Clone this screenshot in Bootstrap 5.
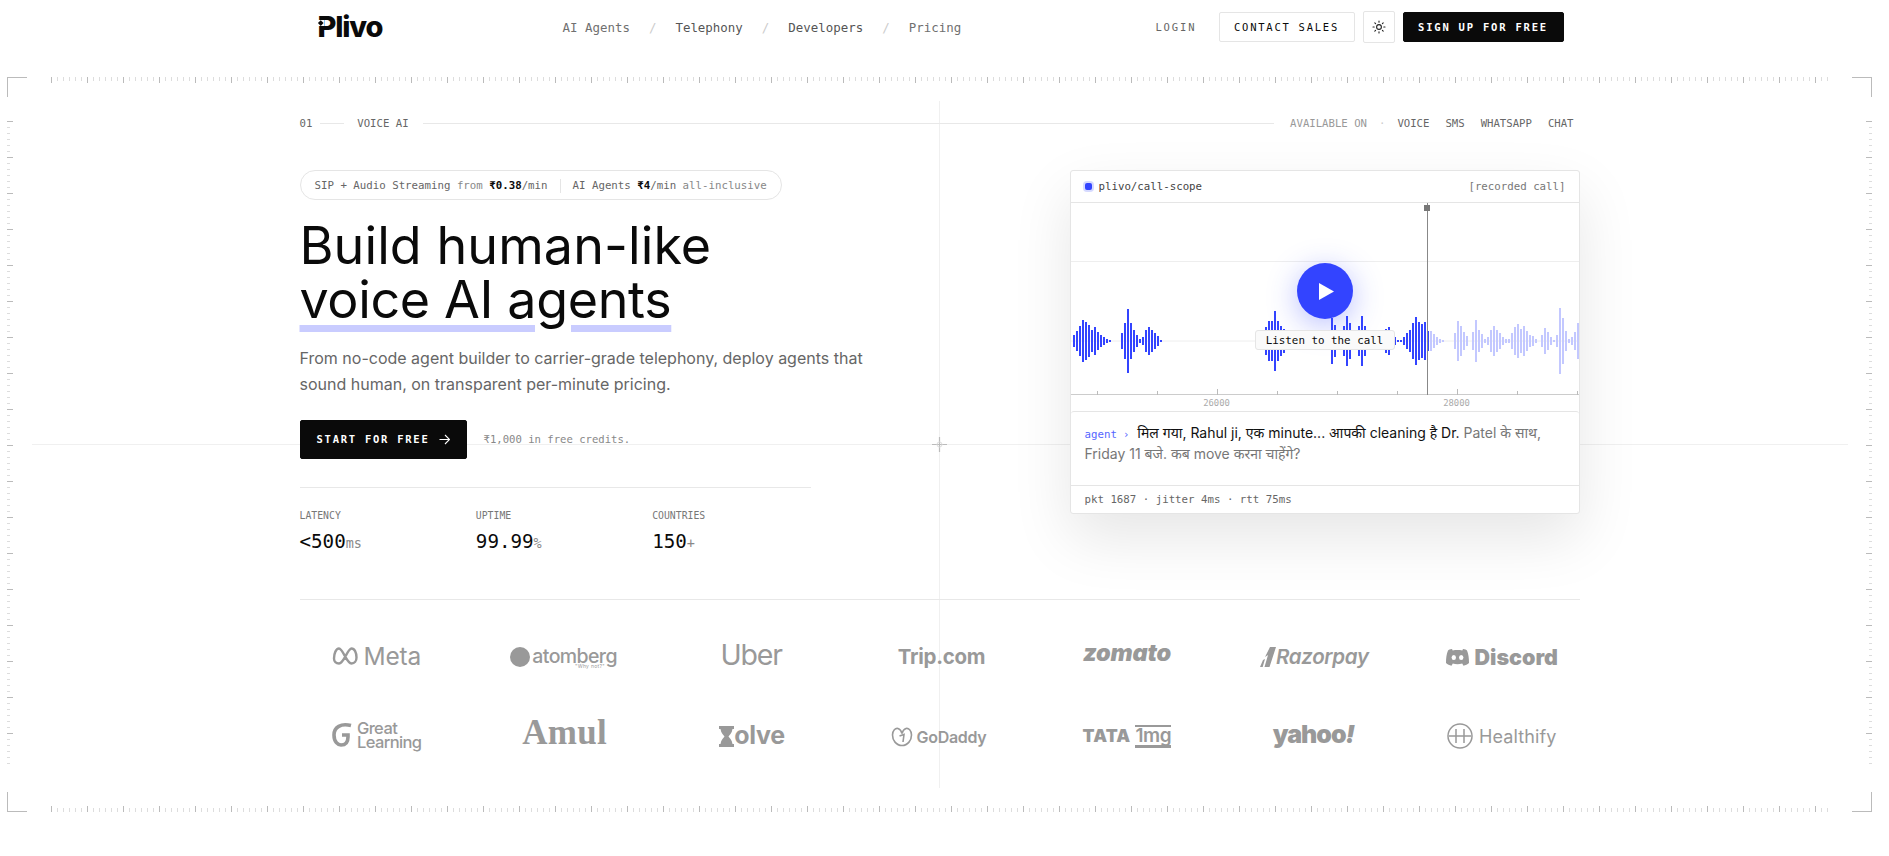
<!DOCTYPE html>
<html lang="en">
<head>
  <meta charset="UTF-8">
  <title>Plivo</title>
  <link href="https://cdn.jsdelivr.net/npm/bootstrap@5.3.0/dist/css/bootstrap.min.css" rel="stylesheet">
  <style>
    body { font-family: Inter, "Noto Sans", sans-serif; color: #0a0a0a; background: #fff; overflow: hidden; }
    .page { position: relative; width: 1879px; height: 856px; overflow: hidden; }
    .mono { font-family: "DejaVu Sans Mono", "Liberation Mono", monospace; font-size: 10.75px; }
    .nudge { padding-top: 2px; }

    /* frame + crosshair decoration */
    .tick-x, .tick-y, .corner, .cross-h, .cross-v, .cross-mark { position: absolute; }
    .tick-x { left: 51px; width: 1777px; height: 6px; background-repeat: repeat-x;
      background-image: linear-gradient(90deg, #bbb 1px, transparent 1px), linear-gradient(90deg, #ddd 1px, transparent 1px);
      background-size: 36px 6px, 6px 4px; }
    .tick-x.top-side { top: 77px; }
    .tick-x.bottom-side { top: 806px; background-position: 0 100%; }
    .tick-y { top: 121px; height: 643px; width: 6px; background-repeat: repeat-y;
      background-image: linear-gradient(180deg, #bbb 1px, transparent 1px), linear-gradient(180deg, #ddd 1px, transparent 1px);
      background-size: 6px 36px, 3px 6px; }
    .tick-y.left-side { left: 7px; }
    .tick-y.right-side { left: 1866px; background-position: 100% 0; }
    .corner { width: 20px; height: 20px; border: 0 solid #bbb; }
    .corner.tl { left: 7px; top: 77px; border-width: 1px 0 0 1px; }
    .corner.tr { left: 1852px; top: 77px; border-width: 1px 1px 0 0; }
    .corner.bl { left: 7px; top: 792px; border-width: 0 0 1px 1px; }
    .corner.br { left: 1852px; top: 792px; border-width: 0 1px 1px 0; }
    .cross-h { left: 32px; width: 1816px; top: 444px; height: 1px; background: #f0f0f0; }
    .cross-v { left: 939px; top: 101px; width: 1px; height: 687px; background: #f0f0f0; }
    .cross-mark { left: 932px; top: 437px; }

    /* nav */
    .top-nav { position: relative; height: 55px; width: 1280px; margin: 0 auto; padding: 11px 16px 0 18px; align-items: flex-start; }
    .logo-word { font-weight: 800; font-size: 29px; letter-spacing: -1.2px; line-height: 32px; color: #0a0a0a; text-decoration: none; position: relative; }
    .logo-word i { position: absolute; left: 0; top: 9px; width: 6px; height: 6px; background: #fff; }
    .logo-word i::after { content: ""; position: absolute; left: 1px; top: 1px; width: 3.5px; height: 3.5px; background: #0a0a0a; transform: rotate(45deg); }
    .nav-mid { position: absolute; left: 263px; top: 12px; height: 32px; font-size: 12.45px; gap: 19px; }
    .nav-mid a { color: #707070; text-decoration: none; }
    .nav-mid a.cur { color: #555; }
    .nav-mid span { color: #ccc; }
    .nav-right { gap: 8px; }
    .nav-login { color: #666; font-size: 10.5px; letter-spacing: 1.9px; text-decoration: none; margin-right: 14px; padding-top: 2px; }
    .btn-line, .btn-ink { font-family: "DejaVu Sans Mono", monospace; border-radius: 2px; display: inline-flex; align-items: center; justify-content: center; height: 30px; padding: 2px 0 0; font-size: 10.5px; }
    .btn-line { width: 136px; margin-top: 1px; background: #fff; border: 1px solid #e5e5e5; color: #0a0a0a; letter-spacing: 1.75px; font-weight: 500; }
    .btn-sun { width: 32px; height: 32px; background: #fff; border: 1px solid #e5e5e5; border-radius: 2px; padding: 0; display: inline-flex; align-items: center; justify-content: center; }
    .btn-ink { background: #0a0a0a; border: 1px solid #0a0a0a; color: #fff; font-weight: 700; letter-spacing: 1.8px; }
    .btn-ink:hover { background: #0a0a0a; color: #fff; }
    .btn-signup { width: 161px; margin-top: 1px; }
    .btn-start { width: 167px; height: 39px; letter-spacing: 1.75px; gap: 9px; padding-top: 0; }

    /* hero */
    .hero { position: relative; width: 1280px; margin: 0 auto; padding-top: 60px; }
    .label-row { height: 16px; font-size: 10.65px; color: #666; padding-right: 6px; }
    .label-row .rule-line { height: 1px; background: #e8e8e8; }
    .label-row .dim { color: #999; }
    .voice-tag { margin: 0 14px 0 5px; }
    .label-dot { color: #ccc; margin: 0 12px; }
    .pill-note { display: inline-flex; height: 30px; align-items: center; padding: 2px 14px 0; border: 1px solid #e5e5e5; border-radius: 15px; color: #666; background: #fff; }
    .pill-note b { color: #0a0a0a; font-weight: 700; }
    .pill-note em { font-style: normal; color: #888; }
    .pill-note u { text-decoration: none; width: 1px; height: 14px; background: #e5e5e5; margin: 0 12px; }
    .hero-title { font-family: Inter, sans-serif; font-size: 52px; line-height: 54px; font-weight: 400; letter-spacing: .1px; margin: 19px 0 0; }
    .hero-title span { letter-spacing: -.36px; text-decoration: underline; text-decoration-color: #c9ccff; text-decoration-thickness: 7px; text-underline-offset: 7px; text-decoration-skip-ink: auto; }
    .hero-sub { font-size: 16px; line-height: 26px; color: #666; margin: 18px 0 0; }
    .credit-note { color: #888; font-size: 10.6px; margin-left: 17px; }
    .stats-rule { width: 511px; height: 1px; background: #e8e8e8; margin-top: 28px; }
    .stat-grid { width: 529px; display: grid; grid-template-columns: repeat(3, 1fr); margin-top: 21px; }
    .stat-label { font-size: 9.8px; line-height: 14px; color: #777; }
    .stat-value { font-size: 19.2px; line-height: 24px; margin-top: 7px; color: #0a0a0a; font-weight: 500; }
    .stat-value small { font-size: 13.5px; color: #888; font-weight: 400; }

    /* call card */
    .scope-card { position: relative; width: 510px; height: 344px; border: 1px solid #e5e5e5; border-radius: 3px; background: #fff; box-shadow: 0 24px 60px rgba(0,0,0,.1); }
    .scope-head { height: 32px; padding: 2px 13px 0 14px; border-bottom: 1px solid #e5e5e5; color: #444; }
    .scope-head .rec-note { color: #777; }
    .scope-dot { width: 7px; height: 7px; border-radius: 2px; background: #3344ff; box-shadow: 0 0 0 2px rgba(51,68,255,.2); margin-right: 7px; margin-top: -2px; }
    .scope-plot { position: relative; height: 192px; border-bottom: 1px solid #ccc; }
    #wave { position: absolute; left: 0; top: 0; display: block; }
    .play-btn { position: absolute; left: 226px; top: 60px; width: 56px; height: 56px; border-radius: 50%; border: 0; padding: 0 0 0 3px; background: #3344ff; box-shadow: 0 6px 30px rgba(51,68,255,.35); display: flex; align-items: center; justify-content: center; }
    .listen-tip { position: absolute; left: 184px; top: 127px; width: 140px; height: 20px; line-height: 20px; text-align: center; font-size: 10.85px; background: #fafafa; border: 1px solid #e5e5e5; border-radius: 3px; color: #0a0a0a; }
    .axis-labels { position: relative; height: 16px; font-size: 8.9px; line-height: 16px; color: #aaa; }
    .axis-labels span { position: absolute; top: 0; transform: translateX(-50%); }
    .transcript { height: 74px; padding: 10px 14px 0; border-top: 1px solid #e5e5e5; border-radius: 3px 3px 0 0; font-size: 14px; line-height: 21px; color: #111; }
    .transcript .who { color: #5566ff; margin-right: 5px; line-height: 1; }
    .transcript .who i { font-style: normal; margin-left: 6px; margin-right: 3px; }
    .transcript .later { color: #777; }
    .scope-foot { height: 28px; line-height: 28px; padding: 0 14px; border-top: 1px solid #e5e5e5; color: #666; }

    /* logos */
    .logo-wall { border-top: 1px solid #e8e8e8; margin-top: 44px; padding-top: 37px; display: grid; grid-template-columns: repeat(7, 1fr); column-gap: 32px; row-gap: 40px; }
    .brand { height: 40px; display: flex; align-items: center; justify-content: center; color: #999; white-space: nowrap; }
    .brand svg { flex: none; }
    .b-meta { font-size: 24.5px; letter-spacing: -.2px; gap: 4px; margin: -1px 0 0 -1px; }
    .b-atom-in { position: relative; display: flex; align-items: center; gap: 2px; font-size: 19.5px; font-weight: 500; letter-spacing: -.6px; }
    .b-atom-in small { position: absolute; right: 14px; top: 21px; font-size: 5px; line-height: 6px; letter-spacing: .3px; font-weight: 400; }
    .b-uber { font-size: 28.5px; letter-spacing: -1.2px; margin: -2px 2px 0 0; }
    .b-trip { font-size: 20.5px; font-weight: 700; letter-spacing: -.3px; margin-left: 4px; }
    .b-zomato { font-size: 23.5px; font-weight: 900; font-style: italic; letter-spacing: -.2px; margin-top: -4px; }
    .b-razor { font-size: 20.5px; font-style: italic; font-weight: 600; letter-spacing: -.3px; }
    .b-discord { font-size: 21.5px; font-weight: 900; gap: 6px; }
    .b-great { gap: 5px; font-size: 16.5px; line-height: 14.5px; letter-spacing: -.6px; font-weight: 500; margin: -2px 0 0 -2px; }
    .b-amul { font-family: "Liberation Serif", serif; font-size: 35px; font-weight: 700; letter-spacing: .3px; margin-top: -4px; }
    .b-xolve { font-size: 25px; font-weight: 700; letter-spacing: -.3px; margin-top: -1px; }
    .b-godaddy { font-size: 16px; font-weight: 600; gap: 4px; letter-spacing: -.3px; margin-left: -2px; }
    .b-tata { font-weight: 900; gap: 5px; font-size: 17.5px; letter-spacing: .2px; margin-top: -1px; }
    .b-tata span { font-size: 19px; font-weight: 600; border-top: 2px solid #999; border-bottom: 3px solid #999; line-height: 18px; letter-spacing: -.4px; }
    .b-yahoo { font-size: 25px; font-weight: 900; letter-spacing: -1px; margin: -2px 2px 0 0; }
    .b-healthify { font-size: 18px; gap: 6px; letter-spacing: .1px; margin-top: -1px; }
  </style>
</head>
<body>
<div class="page">
  <div class="tick-x top-side"></div>
  <div class="tick-x bottom-side"></div>
  <div class="tick-y left-side"></div>
  <div class="tick-y right-side"></div>
  <div class="corner tl"></div>
  <div class="corner tr"></div>
  <div class="corner bl"></div>
  <div class="corner br"></div>
  <div class="cross-h"></div>
  <div class="cross-v"></div>
  <svg class="cross-mark" width="15" height="15" viewBox="0 0 15 15"><path d="M7.5 0v15M0 7.5h15" stroke="#bbb" stroke-width="1.2"/><circle cx="7.5" cy="7.5" r="2.5" fill="none" stroke="#ddd"/></svg>

  <nav class="top-nav d-flex justify-content-between">
    <a class="logo-word" href="#">Plivo<i></i></a>
    <div class="nav-mid mono d-flex align-items-center">
      <a href="#">AI Agents</a><span>/</span>
      <a class="cur" href="#">Telephony</a><span>/</span>
      <a class="cur" href="#">Developers</a><span>/</span>
      <a href="#">Pricing</a>
    </div>
    <div class="nav-right d-flex align-items-start">
      <a class="nav-login mono align-self-center" href="#">LOGIN</a>
      <button class="btn btn-line">CONTACT SALES</button>
      <button class="btn btn-sun" aria-label="Theme">
        <svg width="14" height="14" viewBox="0 0 14 14" fill="none" stroke="#222" stroke-width="1.1" stroke-linecap="round"><circle cx="7" cy="7" r="2.4"/><path d="M7 1v1.2M7 11.8V13M1 7h1.2M11.8 7H13M2.8 2.8l.8.8M10.4 10.4l.8.8M2.8 11.2l.8-.8M10.4 3.6l.8-.8"/></svg>
      </button>
      <button class="btn btn-ink btn-signup">SIGN UP FOR FREE</button>
    </div>
  </nav>

  <main class="hero">
    <div class="label-row mono d-flex align-items-center">
      <span class="nudge">01</span>
      <span class="rule-line mx-2" style="width:24px"></span>
      <span class="nudge voice-tag">VOICE AI</span>
      <span class="rule-line flex-grow-1 me-3"></span>
      <span class="nudge dim">AVAILABLE ON</span>
      <span class="nudge label-dot">·</span>
      <span class="nudge d-flex gap-3"><span>VOICE</span><span>SMS</span><span>WHATSAPP</span><span>CHAT</span></span>
    </div>

    <div class="d-flex justify-content-between" style="padding-top:39px">
      <div>
        <div class="pill-note mono">SIP + Audio Streaming&nbsp;<em>from</em>&nbsp;<b>₹0.38</b>/min<u></u>AI Agents&nbsp;<b>₹4</b>/min&nbsp;<em>all-inclusive</em></div>
        <h1 class="hero-title">Build human-like<br><span>voice AI agents</span></h1>
        <p class="hero-sub">From no-code agent builder to carrier-grade telephony, deploy agents that<br>sound human, on transparent per-minute pricing.</p>
        <div class="d-flex align-items-center" style="margin-top:23px">
          <button class="btn btn-ink btn-start">START FOR FREE
            <svg width="11" height="11" viewBox="0 0 11 11" fill="none" stroke="#fff" stroke-width="1.1"><path d="M.5 5.5h10M6 1l4.5 4.5L6 10"/></svg>
          </button>
          <span class="credit-note mono">₹1,000 in free credits.</span>
        </div>
        <div class="stats-rule"></div>
        <div class="stat-grid mono">
          <div><div class="stat-label mono">LATENCY</div><div class="stat-value mono">&lt;500<small class="mono">ms</small></div></div>
          <div><div class="stat-label mono">UPTIME</div><div class="stat-value mono">99.99<small class="mono">%</small></div></div>
          <div><div class="stat-label mono">COUNTRIES</div><div class="stat-value mono">150<small class="mono">+</small></div></div>
        </div>
      </div>

      <div class="scope-card">
        <div class="scope-head mono d-flex align-items-center">
          <span class="scope-dot"></span>
          <span>plivo/call-scope</span>
          <span class="rec-note ms-auto">[recorded call]</span>
        </div>
        <div class="scope-plot">
          <svg id="wave" width="508" height="192" viewBox="0 0 508 192"></svg>
          <button class="play-btn" aria-label="Play">
            <svg width="15" height="17" viewBox="0 0 15 17"><path d="M0 0 15 8.5 0 17z" fill="#fff"/></svg>
          </button>
          <div class="listen-tip mono">Listen to the call</div>
        </div>
        <div class="axis-labels mono"><span style="left:146px">26000</span><span style="left:386px">28000</span></div>
        <div class="transcript"><span class="who mono">agent<i>›</i></span>मिल गया, Rahul ji, एक minute... आपकी cleaning है Dr. <span class="later">Patel के साथ, Friday 11 बजे. कब move करना चाहेंगे?</span></div>
        <div class="scope-foot mono">pkt 1687 · jitter 4ms · rtt 75ms</div>
      </div>
    </div>

    <section class="logo-wall">
      <div class="brand b-meta">
        <svg width="27" height="18" viewBox="0 0 27 18" fill="none" stroke="#999" stroke-width="2.4"><path d="M2 11.5c0-5 2-10 5-10 4 0 7.5 15 12.500 15 3 0 5-2.500 5-6 0-5-2-9-5-9-4 0-7.500 15-12.500 15-3 0-5-2-5-5z"/></svg>
        Meta
      </div>
      <div class="brand"><div class="b-atom-in">
        <svg width="20" height="20" viewBox="0 0 20 20"><circle cx="10" cy="10" r="10" fill="#999"/></svg>
        atomberg<small>"Why not?"</small>
      </div></div>
      <div class="brand b-uber">Uber</div>
      <div class="brand b-trip">Trip.com</div>
      <div class="brand b-zomato">zomato</div>
      <div class="brand b-razor">
        <svg width="16" height="20" viewBox="0 0 16 20"><path d="M10 0 16 0 9.5 20H4.5L8 8 5 10z M3 13 5 12 2.7 20H0z" fill="#999"/></svg>
        Razorpay
      </div>
      <div class="brand b-discord">
        <svg width="23" height="18" viewBox="0 0 23 18"><path d="M6 1c-2 .3-3.4.8-4 1.4C.5 6 0 10 0 15c1.500 1.400 3.500 2.300 5.500 2.700l1.300-2.200c3 1 6.400 1 9.400 0l1.300 2.200c2-.4 4-1.300 5.500-2.700 0-5-.5-9-2-12.600C20.400 1.800 19 1.300 17 1l-.7 1.400c-3-.4-6.600-.4-9.600 0z" fill="#999"/><ellipse cx="7.8" cy="9.5" rx="2.2" ry="2.6" fill="#fff"/><ellipse cx="15.2" cy="9.5" rx="2.2" ry="2.6" fill="#fff"/></svg>
        Discord
      </div>

      <div class="brand b-great">
        <svg width="21" height="26" viewBox="0 0 21 26" fill="none" stroke="#999" stroke-width="3.6"><path d="M20 3.5C10 1 3 5 3 13c0 7 4 10 7 10 4 0 7-2 7-8v-2h-6"/></svg>
        <span>Great<br>Learning</span>
      </div>
      <div class="brand b-amul">Amul</div>
      <div class="brand b-xolve">
        <svg width="15" height="21" viewBox="0 0 15 21"><path d="M0 0h15v3h-1.5C13 7 10.5 9 9.5 10.5 10.5 12 13 14 13.5 18H15v3H0v-3h1.500C2 14 4.500 12 5.500 10.500 4.500 9 2 7 1.500 3H0z" fill="#999"/></svg>
        <span>olve</span>
      </div>
      <div class="brand b-godaddy">
        <svg width="22" height="20" viewBox="0 0 22 20" fill="none" stroke="#999" stroke-width="1.6"><path d="M11 18.500C5 18.500 1.500 13 1.500 8 1.500 3.500 4.500.8 7 1.500c2 .6 3.500 3 4 5 .5-2 2-4.400 4-5 2.500-.7 5.500 2 5.500 6.500 0 5-3.500 10.500-9.500 10.500z"/><path d="M8.5 9 13 7.5 12 15"/></svg>
        GoDaddy
      </div>
      <div class="brand b-tata">TATA <span>1mg</span></div>
      <div class="brand b-yahoo"><span>yahoo<i>!</i></span></div>
      <div class="brand b-healthify">
        <svg width="26" height="26" viewBox="0 0 26 26" fill="none" stroke="#999" stroke-width="1.5"><circle cx="13" cy="13" r="12"/><path d="M9 6v14M17 6v14M2 13h22"/></svg>
        Healthify
      </div>
    </section>
  </main>
</div>

<script>
  // half-heights of the waveform, one bar every 3px; bars from 119 on are the unplayed part
  const bars = [6,10,15,21,19,16,11,14,9,6,4,2,1,0,0,0,
    8,18,32,18,11,6,2,4,11,14,11,8,5,1,
    0,0,0,0,0,0,0,0,0,0,0,0,0,0,0,0,0,0,0,0,0,0,0,0,0,0,0,0,0,0,0,0,0,0,
    14,20,20,30,20,15,12,7,
    0,0,0,0,0,0,0,0,0,0,0,0,0,0,
    23,16,6,4,15,25,18,6,4,15,25,15,6,4,2,0,0,0,12,14,6,4,1,1,4,8,11,18,24,19,17,19,10,
    10,7,4,2,1,0,0,0,8,20,15,9,5,0,9,21,11,7,2,4,11,15,11,8,4,2,2,8,14,17,12,15,10,6,5,2,0,6,13,9,4,1,6,33,23,10,2,4,9,18];

  const cy = 138;
  let svg = `<line x1="0" x2="508" y1="58.5" y2="58.5" stroke="#eee"/><line x1="0" x2="508" y1="${cy}" y2="${cy}" stroke="#eee"/>`;
  bars.forEach((h, i) => {
    if (!h) return;
    const fill = i < 119 ? '#3344ff' : '#c3c8ff';
    svg += `<rect x="${2 + i * 3}" y="${cy - h}" width="2" height="${h * 2}" fill="${fill}"/>`;
  });
  // axis ticks, 60px apart, the labelled ones are taller
  for (let x = 26; x < 507; x += 60) {
    const tall = x === 146 || x === 386;
    svg += `<rect x="${x}" y="${tall ? 186 : 188}" width="1" height="${tall ? 6 : 4}" fill="#bbb"/>`;
  }
  svg += `<rect x="356" y="0" width="1" height="192" fill="#888"/><rect x="353" y="2" width="6" height="6" fill="#777"/>`;
  document.getElementById('wave').innerHTML = svg;
</script>
</body>
</html>
